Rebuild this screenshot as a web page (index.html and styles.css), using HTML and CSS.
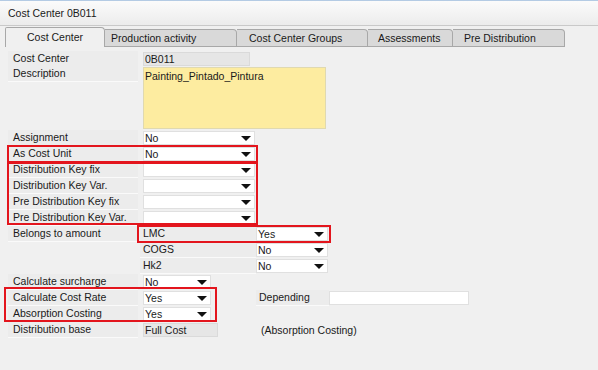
FILE: index.html
```html
<!DOCTYPE html>
<html lang="en">
<head>
  <meta charset="UTF-8">
  <title>Cost Center 0B011</title>
  <link rel="stylesheet" href="styles.css">
</head>
<body>
  <div class="titlebar">Cost Center 0B011</div>

  <div class="tabs">
    <div class="tab active">Cost Center</div>
    <div class="tab t-prod">Production activity</div>
    <div class="tab t-groups">Cost Center Groups</div>
    <div class="tab t-assess">Assessments</div>
    <div class="tab t-pre">Pre Distribution</div>
  </div>

  <div class="form">
    <div class="row head">
      <div class="label">Cost Center</div>
      <div class="field readonly w107">0B011</div>
    </div>
    <div class="row desc">
      <div class="label">Description</div>
      <div class="textarea">Painting_Pintado_Pintura</div>
    </div>

    <div class="row">
      <div class="label">Assignment</div>
      <div class="select w110">No</div>
    </div>
    <div class="row">
      <div class="label">As Cost Unit</div>
      <div class="select w110">No</div>
    </div>
    <div class="row">
      <div class="label">Distribution Key fix</div>
      <div class="select w110"></div>
    </div>
    <div class="row">
      <div class="label">Distribution Key Var.</div>
      <div class="select w110"></div>
    </div>
    <div class="row">
      <div class="label">Pre Distribution Key fix</div>
      <div class="select w110"></div>
    </div>
    <div class="row">
      <div class="label">Pre Distribution Key Var.</div>
      <div class="select w110"></div>
    </div>

    <div class="row">
      <div class="label">Belongs to amount</div>
      <div class="sublabel">LMC</div>
      <div class="select w72">Yes</div>
    </div>
    <div class="row">
      <div class="label blank"></div>
      <div class="sublabel">COGS</div>
      <div class="select w72">No</div>
    </div>
    <div class="row">
      <div class="label blank"></div>
      <div class="sublabel">Hk2</div>
      <div class="select w72">No</div>
    </div>

    <div class="row">
      <div class="label">Calculate surcharge</div>
      <div class="select w67">No</div>
    </div>
    <div class="row">
      <div class="label">Calculate Cost Rate</div>
      <div class="select w67">Yes</div>
      <div class="label side">Depending</div>
      <div class="field w140"></div>
    </div>
    <div class="row">
      <div class="label">Absorption Costing</div>
      <div class="select w67">Yes</div>
    </div>
    <div class="row">
      <div class="label">Distribution base</div>
      <div class="field readonly w75">Full Cost</div>
      <div class="note">(Absorption Costing)</div>
    </div>

    <!-- highlight frames drawn over the form -->
    <div class="mark m1"></div>
    <div class="mark m2"></div>
    <div class="mark m3"></div>
    <div class="mark m4"></div>
  </div>
</body>
</html>
```

FILE: styles.css
```css
body {
  margin: 0;
  background: #f0f0f0;
  font-family: "Liberation Sans", Arial, sans-serif;
  font-size: 10.5px;
  color: #1a1a1a;
  width: 598px;
  height: 370px;
  overflow: hidden;
}
.titlebar {
  height: 24px;
  line-height: 25px;
  padding-left: 8px;
  border-top: 1px solid #b4cbe4;
  border-bottom: 1px solid #c9c9c9;
  background: linear-gradient(#fbfbfb, #ececec);
}
.tabs {
  display: flex;
  align-items: flex-end;
  height: 21px;
  padding-left: 5px;
  margin-bottom: 1px;
}
.tab {
  box-sizing: border-box;
  height: 18px;
  line-height: 16px;
  background: #d9d9d9;
  border: 1px solid #a8a8a8;
  border-left: none;
  border-top-right-radius: 4px;
  padding-left: 6px;
}
.tab.active {
  width: 100px;
  height: 20px;
  line-height: 19px;
  background: #f0f0f0;
  border: 1px solid #a8a8a8;
  border-bottom: none;
  border-top-left-radius: 2px;
  padding-left: 0;
  text-align: center;
}
.t-prod { width: 132px; }
.t-groups { width: 131px; padding-left: 12px; }
.t-assess { width: 85px; padding-left: 10px; }
.t-pre { width: 112px; padding-left: 11px; }

.form {
  position: relative;
  padding: 3px 0 0 8px;
}
.row {
  display: flex;
  align-items: center;
  height: 16px;
}
.row.head { height: 15px; }
.row.desc {
  height: 63px;
  align-items: flex-start;
  margin-bottom: 1px;
}
.label {
  width: 125px;
  height: 15px;
  line-height: 15px;
  padding-left: 5px;
  margin-right: 5px;
  background: #ececec;
  border-bottom: 1px solid #fafafa;
  white-space: nowrap;
}
.label.blank {
  background: transparent;
  border-bottom-color: transparent;
}
.label.side {
  width: 70px;
  padding-left: 3px;
  margin-left: 45px;
  margin-right: 0;
}
.sublabel {
  width: 113px;
  height: 15px;
  line-height: 15px;
  padding-left: 3px;
  margin-left: -3px;
  background: #ececec;
  border-bottom: 1px solid #fafafa;
}
.field, .select {
  position: relative;
  box-sizing: border-box;
  height: 14px;
  line-height: 12px;
  padding-left: 1px;
  background: #fff;
  border: 1px solid #e0e0e0;
}
.field.readonly {
  background: #e6e6e6;
  border-color: #dadada;
}
.select::after {
  content: "";
  position: absolute;
  right: 3px;
  top: 4px;
  border-left: 5px solid transparent;
  border-right: 5px solid transparent;
  border-top: 5px solid #111;
}
.textarea {
  box-sizing: border-box;
  width: 183px;
  height: 62px;
  margin-top: 1px;
  padding: 2px 1px;
  background: #fdeca0;
  border: 1px solid #e0d9b0;
}
.w107 { width: 107px; }
.w110 { width: 112px; }
.w72 { width: 72px; }
.w67 { width: 68px; }
.w75 { width: 75px; }
.w140 { width: 140px; }
.note { margin-left: 43px; }

.mark {
  position: absolute;
  border: 2px solid #e3151d;
  box-sizing: border-box;
}
.m1 { left: 7px; top: 97px; width: 251px; height: 18px; }
.m2 { left: 7px; top: 114px; width: 251px; height: 63px; }
.m3 { left: 137px; top: 177px; width: 194px; height: 18px; }
.m4 { left: 4px; top: 239px; width: 213px; height: 35px; }
```
